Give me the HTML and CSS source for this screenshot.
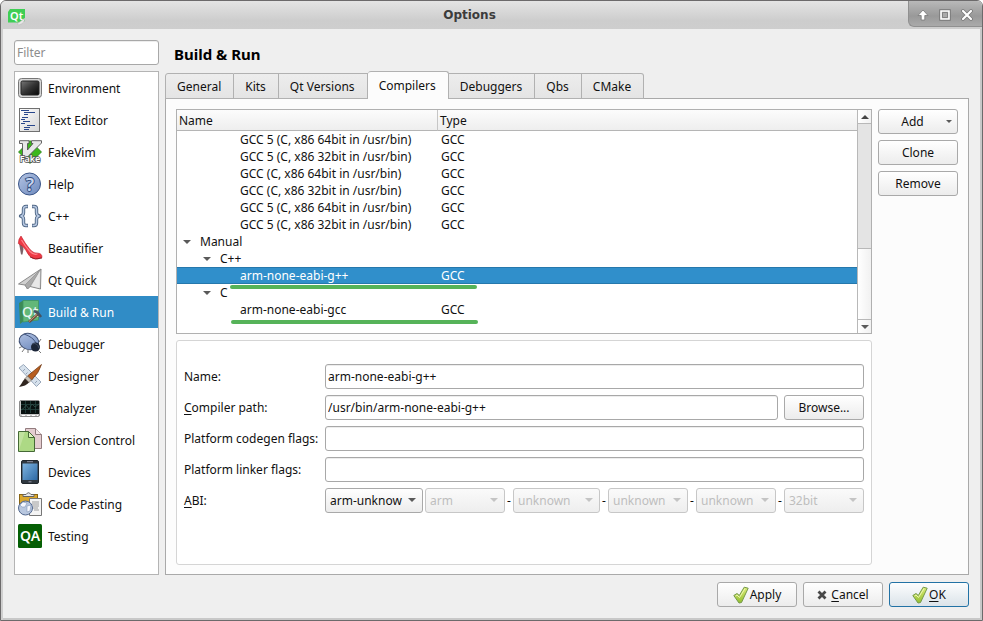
FILE: index.html
```html
<!DOCTYPE html>
<html lang="en">
<head>
<meta charset="utf-8">
<title>Options</title>
<link rel="stylesheet" href="styles.css">
</head>
<body>
<svg width="0" height="0" class="defs" aria-hidden="true">
  <defs>
    <linearGradient id="g-dark" x1="0" y1="0" x2="1" y2="1"><stop offset="0" stop-color="#777"/><stop offset=".5" stop-color="#333"/><stop offset="1" stop-color="#050505"/></linearGradient>
    <linearGradient id="g-paper" x1="0" y1="0" x2="1" y2="1"><stop offset="0" stop-color="#fff"/><stop offset="1" stop-color="#d4d4d4"/></linearGradient>
    <linearGradient id="g-blue" x1="0" y1="0" x2="1" y2="1"><stop offset="0" stop-color="#b4c4e4"/><stop offset="1" stop-color="#6c88bc"/></linearGradient>
    <linearGradient id="g-screen" x1="0" y1="0" x2="1" y2="1"><stop offset="0" stop-color="#7fb4e0"/><stop offset="1" stop-color="#2c68a4"/></linearGradient>
    <linearGradient id="g-check" x1="0" y1="0" x2="0" y2="1"><stop offset="0" stop-color="#dcec7a"/><stop offset="1" stop-color="#93bf30"/></linearGradient>
    <symbol id="check" viewBox="0 0 16 18">
      <path d="M.8 9.500L4 7.500L6.300 9.500L11.200 1.200L15.200 2.200L8.500 16.500L6 17Z" fill="url(#g-check)" stroke="#74994a" stroke-width="1" stroke-linejoin="round"/>
      <path d="M2.500 10L4 9L6.500 11.500L12 2.600" fill="none" stroke="#eef7b4" stroke-width="1"/>
    </symbol>
  </defs>
</svg>
<div class="window">
  <header class="titlebar">
    <svg class="app-icon" viewBox="0 0 18 18" aria-hidden="true"><path d="M3 1H18V13L13 14.500H1V4Z" fill="#3fce55"/><text x="3" y="12" font-family="Noto Sans" font-weight="600" font-size="11" fill="#fff">Qt</text><path d="M10 16L18 10Q18 15 12 17Z" fill="#e8e8e8" stroke="#bbb" stroke-width=".6"/></svg>
    <h1 class="window-title">Options</h1>
    <div class="window-controls">
      <button type="button" aria-label="Shade"><svg viewBox="0 0 12 12"><path d="M6 1L11 6.500H7.800V11H4.200V6.500H1Z" fill="#fff" stroke="#777" stroke-width=".8"/></svg></button>
      <button type="button" aria-label="Maximize"><svg viewBox="0 0 12 12"><path d="M2 2H10V10H2Z" fill="none" stroke="#777" stroke-width="3.500"/><path d="M2 2H10V10H2Z" fill="#aaa" stroke="#fff" stroke-width="1.600"/><path d="M3.500 3.500H8.500V8.500H3.500Z" fill="none" stroke="#777" stroke-width=".8"/></svg></button>
      <button type="button" aria-label="Close"><svg viewBox="0 0 12 12"><path d="M2 2L10 10M10 2L2 10" stroke="#777" stroke-width="3.800" stroke-linecap="round"/><path d="M2 2L10 10M10 2L2 10" stroke="#fff" stroke-width="2.200" stroke-linecap="round"/></svg></button>
    </div>
  </header>

  <div class="content">
    <aside class="sidebar">
      <input class="field" type="text" placeholder="Filter" aria-label="Filter">
      <nav class="categories" aria-label="Categories">
        <a href="#environment"><svg viewBox="0 0 24 24"><rect x=".5" y="2.500" width="23" height="19" rx="3" fill="#d6d6d6" stroke="#777"/><rect x="3" y="5" width="18" height="14" rx="1.500" fill="url(#g-dark)" stroke="#222"/></svg>Environment</a>
        <a href="#text-editor"><svg viewBox="0 0 24 24"><rect x="1.500" y=".5" width="20" height="23" fill="url(#g-paper)" stroke="#707070"/><path d="M3 2.500H11M6 4.500H17M6 6.500H10M4 9.500H10M3 11.500H7M5 13.500H12M3 15.500H7M9 17.500H17M6 19.500H12M6 21.500H11" stroke="#28478c" stroke-width="1"/></svg>Text Editor</a>
        <a href="#fakevim"><svg viewBox="0 0 24 24"><path d="M12 .5L23.500 12L12 23.500L.5 12Z" fill="#3cb81c" stroke="#1d700f" stroke-width=".7"/><path d="M1.500 .7H11V3.500H9.500V10L15 3.500H13.500V.7H23.500V3L8.500 18H4.500V3.500H1.500Z" fill="#e8e8e8" stroke="#555" stroke-width=".9"/><text x="12" y="21.500" text-anchor="middle" font-family="Noto Sans" font-size="9" font-weight="600" fill="#fff" stroke="#555" stroke-width="1.600" paint-order="stroke">Fake</text></svg>FakeVim</a>
        <a href="#help"><svg viewBox="0 0 24 24"><circle cx="11.500" cy="12" r="11" fill="url(#g-blue)" stroke="#3a5588"/><text x="12" y="18.500" text-anchor="middle" font-family="Noto Sans" font-size="18" font-weight="600" fill="#c8d6ee" stroke="#334e80" stroke-width="1.800" paint-order="stroke">?</text></svg>Help</a>
        <a href="#cpp"><svg viewBox="0 0 24 24"><g fill="none" stroke-linejoin="round"><path d="M10 2.500H8Q5.500 2.500 5.500 5V8.500Q5.500 11.500 2.500 12Q5.500 12.500 5.500 15.500V19Q5.500 21.500 8 21.500H10M14 2.500H16Q18.500 2.500 18.500 5V8.500Q18.500 11.500 21.500 12Q18.500 12.500 18.500 15.500V19Q18.500 21.500 16 21.500H14" stroke="#526987" stroke-width="3.400"/><path d="M9.500 2.500H8Q5.500 2.500 5.500 5V8.500Q5.500 11.500 3 12Q5.500 12.500 5.500 15.500V19Q5.500 21.500 8 21.500H9.500M14.500 2.500H16Q18.500 2.500 18.500 5V8.500Q18.500 11.500 21 12Q18.500 12.500 18.500 15.500V19Q18.500 21.500 16 21.500H14.500" stroke="#b7c8e2" stroke-width="1.500"/></g></svg>C++</a>
        <a href="#beautifier"><svg viewBox="0 0 24 24"><path d="M1 7L4.500 9.500L5.500 13L4.500 18.500H3Z" fill="#7d6268"/><path d="M3 0Q.2 3 .3 7.500Q5 9.500 8 14.500Q11 21 15 22.500Q20 23.800 24 21.500Q24.200 17.500 20 17.200Q16 18 12 13.500Q7 7.500 3 0Z" fill="#ee3a45" stroke="#c0202b" stroke-width=".6"/><path d="M3.500 4Q7 10 12 15.500Q16 19.500 19.500 18" fill="none" stroke="#ff838b" stroke-width="1.200"/><path d="M12 21Q17 24.500 24 22" fill="none" stroke="#831018" stroke-width=".8"/></svg>Beautifier</a>
        <a href="#qt-quick"><svg viewBox="0 0 24 24"><path d="M23 1L.5 16L7 17L9.500 21L12 18.500L22.500 21Z" fill="#d0d0d0" stroke="#808080" stroke-width=".9"/><path d="M23 1L7 17L9.500 21L12 18.500Z" fill="#aaa" stroke="#888" stroke-width=".6"/><path d="M22 3L13.500 18L21.500 20Z" fill="#e8e8e8"/></svg>Qt Quick</a>
        <a href="#build-run" class="current" aria-current="page"><svg viewBox="0 0 24 24"><path d="M1 3L6 0V21L2 24Z" fill="#3c8a57"/><path d="M5 .5H20.500V20L5 22Z" fill="#62b779" stroke="#3f9560" stroke-width=".8"/><text x="4" y="17" font-family="Noto Sans" font-size="14" font-weight="500" fill="#e8f6f4">Qt</text><path d="M11 22L20 14" stroke="#704b38" stroke-width="2.600"/><path d="M11 21.500L19.500 14" stroke="#c49d82" stroke-width="1"/><path d="M16 11L19.500 12.500L23 17" fill="none" stroke="#455260" stroke-width="2.700"/></svg>Build &amp; Run</a>
        <a href="#debugger"><svg viewBox="0 0 24 24"><path d="M1 6L4 9M1 16L5 14M4 20L7 16M10 18L10 21M21 10L23 7M21 19L23 21" stroke="#777" stroke-width="1"/><ellipse cx="11" cy="9.500" rx="10" ry="8" transform="rotate(18 11 9.500)" fill="url(#g-blue)" stroke="#415276"/><path d="M6 2Q15 5 18 11" fill="none" stroke="#435780"/><circle cx="17.500" cy="15" r="4.500" fill="#1c2639"/><path d="M14.500 12Q19 10 21 16" fill="none" stroke="#44536b"/></svg>Debugger</a>
        <a href="#designer"><svg viewBox="0 0 24 24"><path d="M1 4L5.500 .5L23 18L18.500 22.500Z" fill="#d6e1ec" stroke="#99a8bb"/><path d="M5 7L7 5M8 10L9.500 8.500M11 13L13 11M14 16L15.500 14.500M17 19L19 17" stroke="#8393aa" stroke-width=".8"/><path d="M23.500 .5L9.500 12L13.500 16Q21 9 23.500 .5Z" fill="#b75e21" stroke="#6c3612" stroke-width=".7"/><path d="M9.500 12L13.500 16L11 18.500L7 14.500Z" fill="#c8c2b8" stroke="#675d52" stroke-width=".6"/><path d="M7 14.500L11 18.500Q8 22 1 23Q4 19 5 17Z" fill="#302620"/></svg>Designer</a>
        <a href="#analyzer"><svg viewBox="0 0 24 24"><rect x="1.500" y="4.500" width="20" height="16" rx="1.500" fill="#c7c7c7" stroke="#8b8b8b"/><rect x="3" y="5" width="18" height="13" fill="#07100f"/><path d="M3 8.500H21M3 13.500H21M7.500 5V17M12.500 5V17M17.500 5V17" stroke="#24423f" stroke-width=".8"/><path d="M3 14L6 12L8 9L11 13L14 8L17 11L21 8" fill="none" stroke="#2f504b" stroke-width=".8"/><path d="M4 19.500H20" stroke="#fff" stroke-dasharray="3 2"/></svg>Analyzer</a>
        <a href="#version-control"><svg viewBox="0 0 24 24"><path d="M7.500 .5H17.500L23.500 6.500V20.500H7.500Z" fill="#e4cdd0" stroke="#927c7e"/><path d="M17.500 .5V6.500H23.500" fill="#f5e7e9" stroke="#927c7e"/><path d="M.5 3.500H10.500L16.500 9.500V23.500H.5Z" fill="#add985" stroke="#456936"/><path d="M10.500 3.500V9.500H16.500Z" fill="#dcf2bd" stroke="#456936"/><path d="M1 22V4H7Z" fill="#c9e6a9" opacity=".7"/></svg>Version Control</a>
        <a href="#devices"><svg viewBox="0 0 24 24"><rect x="3.500" y=".5" width="17" height="23" rx="1.500" fill="#303840" stroke="#20262c"/><rect x="4.500" y="3.500" width="15" height="16.500" fill="url(#g-screen)"/><path d="M9 1.700H15M10.500 21.800H13.500" stroke="#aab" stroke-width=".8"/></svg>Devices</a>
        <a href="#code-pasting"><svg viewBox="0 0 24 24"><rect x="1.500" y="2.500" width="18" height="17" fill="#dba72c" stroke="#8a6514"/><path d="M5 4.500V2.500L8 2.500Q10.500 -1 13 2.500H16V4.500Z" fill="#e8e8e8" stroke="#646464"/><path d="M11.500 6.500H23.500V23.500H11.500Z" fill="#f4f4f4" stroke="#777"/><path d="M14 10H21M14 12H21M15 14H21M15 16H20M16 18H21" stroke="#888" stroke-width=".8"/><circle cx="7.500" cy="16" r="7" fill="#b8c7df" stroke="#52688f"/><path d="M2 13L5 10L9 11L7 15L4 15ZM9 14L13 13L12 19L9 20Z" fill="#f5f8ff" stroke="#7488aa" stroke-width=".5"/></svg>Code Pasting</a>
        <a href="#testing"><svg viewBox="0 0 24 24"><rect width="24" height="24" rx="1.500" fill="#055f05"/><text x="12" y="17" text-anchor="middle" font-family="Noto Sans" font-size="14" font-weight="600" fill="#fff">QA</text></svg>Testing</a>
      </nav>
    </aside>

    <main class="page">
      <h2>Build &amp; Run</h2>
      <div class="tabs" role="tablist">
        <button type="button" role="tab">General</button>
        <button type="button" role="tab">Kits</button>
        <button type="button" role="tab">Qt Versions</button>
        <button type="button" role="tab" class="active" aria-selected="true">Compilers</button>
        <button type="button" role="tab">Debuggers</button>
        <button type="button" role="tab">Qbs</button>
        <button type="button" role="tab">CMake</button>
      </div>
      <div class="pane" role="tabpanel">
        <div class="details">
          <div class="tree">
            <table>
              <colgroup><col class="col-name"><col></colgroup>
              <thead><tr><th>Name</th><th>Type</th></tr></thead>
              <tbody>
                <tr><td class="level-2">GCC 5 (C, x86 64bit in /usr/bin)</td><td>GCC</td></tr>
                <tr><td class="level-2">GCC 5 (C, x86 32bit in /usr/bin)</td><td>GCC</td></tr>
                <tr><td class="level-2">GCC (C, x86 64bit in /usr/bin)</td><td>GCC</td></tr>
                <tr><td class="level-2">GCC (C, x86 32bit in /usr/bin)</td><td>GCC</td></tr>
                <tr><td class="level-2">GCC 5 (C, x86 64bit in /usr/bin)</td><td>GCC</td></tr>
                <tr><td class="level-2">GCC 5 (C, x86 32bit in /usr/bin)</td><td>GCC</td></tr>
                <tr><td class="level-0"><i class="arrow"></i>Manual</td><td></td></tr>
                <tr><td class="level-1"><i class="arrow"></i>C++</td><td></td></tr>
                <tr class="selected"><td class="level-2">arm-none-eabi-g++</td><td>GCC</td></tr>
                <tr><td class="level-1"><i class="arrow"></i>C</td><td></td></tr>
                <tr><td class="level-2">arm-none-eabi-gcc</td><td>GCC</td></tr>
              </tbody>
            </table>
            <div class="scrollbar">
              <button type="button" aria-label="Scroll up"><i class="arrow up"></i></button>
              <div class="groove"></div>
              <div class="handle"></div>
              <button type="button" aria-label="Scroll down"><i class="arrow"></i></button>
            </div>
            <span class="mark mark-cpp"></span>
            <span class="mark mark-c"></span>
          </div>

          <form class="group">
            <label for="name">Name:</label>
            <input class="field" id="name" type="text" value="arm-none-eabi-g++">
            <label for="path"><u>C</u>ompiler path:</label>
            <div class="path-row">
              <input class="field" id="path" type="text" value="/usr/bin/arm-none-eabi-g++">
              <button type="button" class="button">Browse...</button>
            </div>
            <label for="codegen">Platform codegen flags:</label>
            <input class="field" id="codegen" type="text">
            <label for="linker">Platform linker flags:</label>
            <input class="field" id="linker" type="text">
            <label for="abi"><u>A</u>BI:</label>
            <div class="abi-row">
              <span class="combo wide"><select id="abi"><option>arm-unknow</option></select><i class="arrow"></i></span>
              <span class="combo"><select disabled aria-label="Architecture"><option>arm</option></select><i class="arrow"></i></span>
              <span class="dash">-</span>
              <span class="combo medium"><select disabled aria-label="System"><option>unknown</option></select><i class="arrow"></i></span>
              <span class="dash">-</span>
              <span class="combo"><select disabled aria-label="Flavor"><option>unknown</option></select><i class="arrow"></i></span>
              <span class="dash">-</span>
              <span class="combo"><select disabled aria-label="Binary format"><option>unknown</option></select><i class="arrow"></i></span>
              <span class="dash">-</span>
              <span class="combo"><select disabled aria-label="Word width"><option>32bit</option></select><i class="arrow"></i></span>
            </div>
          </form>
        </div>
        <div class="actions">
          <button type="button" class="button menu-button"><span>Add</span><i class="arrow small"></i></button>
          <button type="button" class="button">Clone</button>
          <button type="button" class="button">Remove</button>
        </div>
      </div>
    </main>
  </div>

  <footer class="footer">
    <button type="button" class="button"><svg class="check"><use href="#check"/></svg>Apply</button>
    <button type="button" class="button cancel"><svg class="cross" viewBox="0 0 10 10"><path d="M1.500 1.500L8.500 8.500M8.500 1.500L1.500 8.500" stroke="#484848" stroke-width="2.800"/></svg><span><u>C</u>ancel</span></button>
    <button type="button" class="button default"><svg class="check"><use href="#check"/></svg><span><u>O</u>K</span></button>
  </footer>
</div>
</body>
</html>
```
FILE: styles.css
```css
* { box-sizing: border-box; }

body {
  margin: 0;
  background: #fff;
  color: #111;
  font: 12px/17px "Noto Sans", sans-serif;
}

button, input, select { font: inherit; color: inherit; margin: 0; }
button { padding: 0; }
u { text-underline-offset: 2px; }
.defs { position: absolute; }

.window {
  display: flex;
  flex-direction: column;
  min-height: 100vh;
  border: 1px solid #6c6a6b;
  border-radius: 6px 6px 0 0;
  background: #efefef;
  box-shadow: inset 2px 0 #cfcfcf, inset -2px -2px #c8c8c8;
  overflow: hidden;
}

/* Title bar */
.titlebar {
  display: flex;
  justify-content: space-between;
  height: 28px;
  background: linear-gradient(#e4e4e4, #cdcdcd 70%, #cecece);
}
.app-icon { width: 18px; height: 18px; margin: 7px 0 0 6px; }
.window-title {
  flex: 1;
  margin: 0 0 0 6px;
  text-align: center;
  font: bold 12px/28px "DejaVu Sans", sans-serif;
  color: #3c3c3c;
}
.window-controls {
  display: flex;
  align-items: center;
  gap: 10px;
  height: 26px;
  padding: 2px 9px 0 8px;
  border: solid #909090;
  border-width: 0 0 1px 1px;
  border-radius: 0 0 0 6px;
  background: linear-gradient(#b9b9b9, #999 60%, #aaa);
}
.window-controls button { width: 12px; height: 12px; border: 0; background: none; }
.window-controls svg { display: block; width: 12px; height: 12px; overflow: visible; }

.content { display: flex; flex: 1; gap: 6px; padding: 11px 13px 0; }

/* Fields and buttons */
.field {
  width: 100%;
  min-width: 0;
  height: 25px;
  padding: 0 2px;
  border: 1px solid #a8a8a8;
  border-radius: 3px;
  background: #fff;
  box-shadow: inset 0 1px #ededed;
}
.field::placeholder { color: #8d8d8d; opacity: 1; }
.button {
  display: flex;
  align-items: center;
  justify-content: center;
  flex: none;
  width: 80px;
  height: 25px;
  border: 1px solid #a9a9a9;
  border-radius: 3px;
  background: linear-gradient(#fff, #ececec);
}
.arrow {
  flex: none;
  border: solid transparent;
  border-width: 4px 4px 0;
  border-top-color: #5a5a5a;
}
.arrow.up { border-width: 0 4px 4px; border-bottom-color: #444; }
.arrow.small { border-width: 3px 3px 0; }

/* Category list */
.sidebar { display: flex; flex-direction: column; gap: 6px; flex: none; width: 145px; }
.categories { flex: 1; border: 1px solid #b4b4b4; background: #fff; }
.categories a {
  display: flex;
  align-items: center;
  gap: 6px;
  height: 32px;
  padding-left: 3px;
  color: inherit;
  text-decoration: none;
}
.categories a.current { background: #308cc6; color: #fff; }
.categories svg { flex: none; width: 24px; height: 24px; overflow: visible; }

/* Page */
.page { display: flex; flex-direction: column; flex: 1; min-width: 0; }
.page h2 { margin: 4px 9px 7px; font-size: 15px; line-height: 20px; color: #000; }
.tabs { display: flex; align-items: flex-end; height: 28px; margin-bottom: -1px; z-index: 1; }
.tabs button {
  height: 26px;
  padding: 0 12px 0 11px;
  border: 1px solid #b1b1b1;
  border-left-width: 0;
  background: linear-gradient(#ededed, #e4e4e4);
}
.tabs button:first-child { border-left-width: 1px; border-radius: 3px 0 0 0; }
.tabs button:last-child { border-radius: 0 3px 0 0; }
.tabs .active {
  height: 28px;
  border-bottom: 0;
  border-radius: 3px 3px 0 0;
  background: #fcfcfc;
}
.pane {
  display: flex;
  flex: 1;
  gap: 6px;
  padding: 10px 10px 9px;
  border: 1px solid #a9a9a9;
  background: #fcfcfc;
}
.details { display: flex; flex-direction: column; flex: 1; gap: 6px; min-width: 0; }

/* Compiler tree */
.tree {
  position: relative;
  display: flex;
  align-items: stretch;
  height: 225px;
  border: 1px solid #b0b0b0;
  background: #fff;
}
.tree table {
  flex: 1;
  align-self: flex-start;
  border-collapse: separate;
  border-spacing: 0;
  table-layout: fixed;
}
.col-name { width: 261px; }
.tree th {
  height: 21px;
  padding: 0 2px;
  border-bottom: 1px solid #b5b5b5;
  background: linear-gradient(#fcfcfc, #eee);
  text-align: left;
  font-weight: normal;
}
.tree th:first-child { border-right: 1px solid #c6c6c6; }
.tree td { height: 17px; padding: 0 3px; white-space: nowrap; }
.tree .level-0 { padding-left: 6px; }
.tree .level-1 { padding-left: 26px; }
.tree .level-2 { padding-left: 63px; }
.tree td .arrow { display: inline-block; margin-right: 9px; vertical-align: 2px; }
.selected td { background: linear-gradient(#2678ac 1px, #308fcb 1px 16px, #2678ac 16px); color: #fff; }
.scrollbar {
  display: flex;
  flex-direction: column;
  flex: none;
  width: 14px;
  border-left: 1px solid #b8b8b8;
}
.scrollbar button {
  display: grid;
  place-items: center;
  height: 14px;
  border: 0 solid #b8b8b8;
  background: linear-gradient(90deg, #fff, #f1f1f1);
}
.scrollbar button:first-child { border-bottom-width: 1px; }
.scrollbar button:last-child { border-top-width: 1px; }
.groove { flex: 125; background: #e4e4e4; }
.handle { flex: 70; border-top: 1px solid #b8b8b8; background: linear-gradient(90deg, #fff, #f1f1f1); }
.mark {
  position: absolute;
  width: 247px;
  height: 4px;
  border-radius: 2px;
  background: #56b359;
}
.mark-cpp { left: 53px; top: 175px; }
.mark-c { left: 54px; top: 210px; }

/* Compiler form */
.group {
  display: grid;
  grid-template-columns: 135px 1fr;
  align-content: start;
  align-items: center;
  gap: 6px;
  flex: 1;
  padding: 23px 7px;
  border: 1px solid #d5d5d5;
  border-radius: 3px;
  background: #fff;
}
.group label { white-space: nowrap; }
.path-row { display: flex; gap: 6px; }
.abi-row { display: flex; align-items: center; }
.combo { position: relative; flex: 80 1 0; min-width: 0; }
.combo.wide { flex-grow: 98; margin-right: 2px; }
.combo.medium { flex-grow: 87; }
.combo select {
  display: block;
  appearance: none;
  width: 100%;
  height: 25px;
  padding: 0 18px 0 4px;
  border: 1px solid #a9a9a9;
  border-radius: 3px;
  background: linear-gradient(#fff, #ececec);
}
.combo select:disabled {
  border-color: #c7c7c7;
  background: linear-gradient(#fafafa, #eee);
  color: #bebebe;
  opacity: 1;
}
.combo .arrow { position: absolute; right: 7px; top: 10px; pointer-events: none; }
.combo select:disabled + .arrow { border-top-color: #c4c4c4; }
.dash { flex: none; width: 8px; text-align: center; }

/* Side and bottom actions */
.actions { display: flex; flex-direction: column; gap: 6px; }
.menu-button { padding-right: 5px; }
.menu-button span { flex: 1; }
.footer { display: flex; justify-content: flex-end; gap: 6px; padding: 7px 13px 13px; }
.check { width: 16px; height: 18px; margin-right: 1px; }
.cross { width: 10px; height: 10px; margin-right: 4px; }
.footer .default { border-color: #2272a5; background: linear-gradient(#fcfdfe, #dbe3e9); }
```
